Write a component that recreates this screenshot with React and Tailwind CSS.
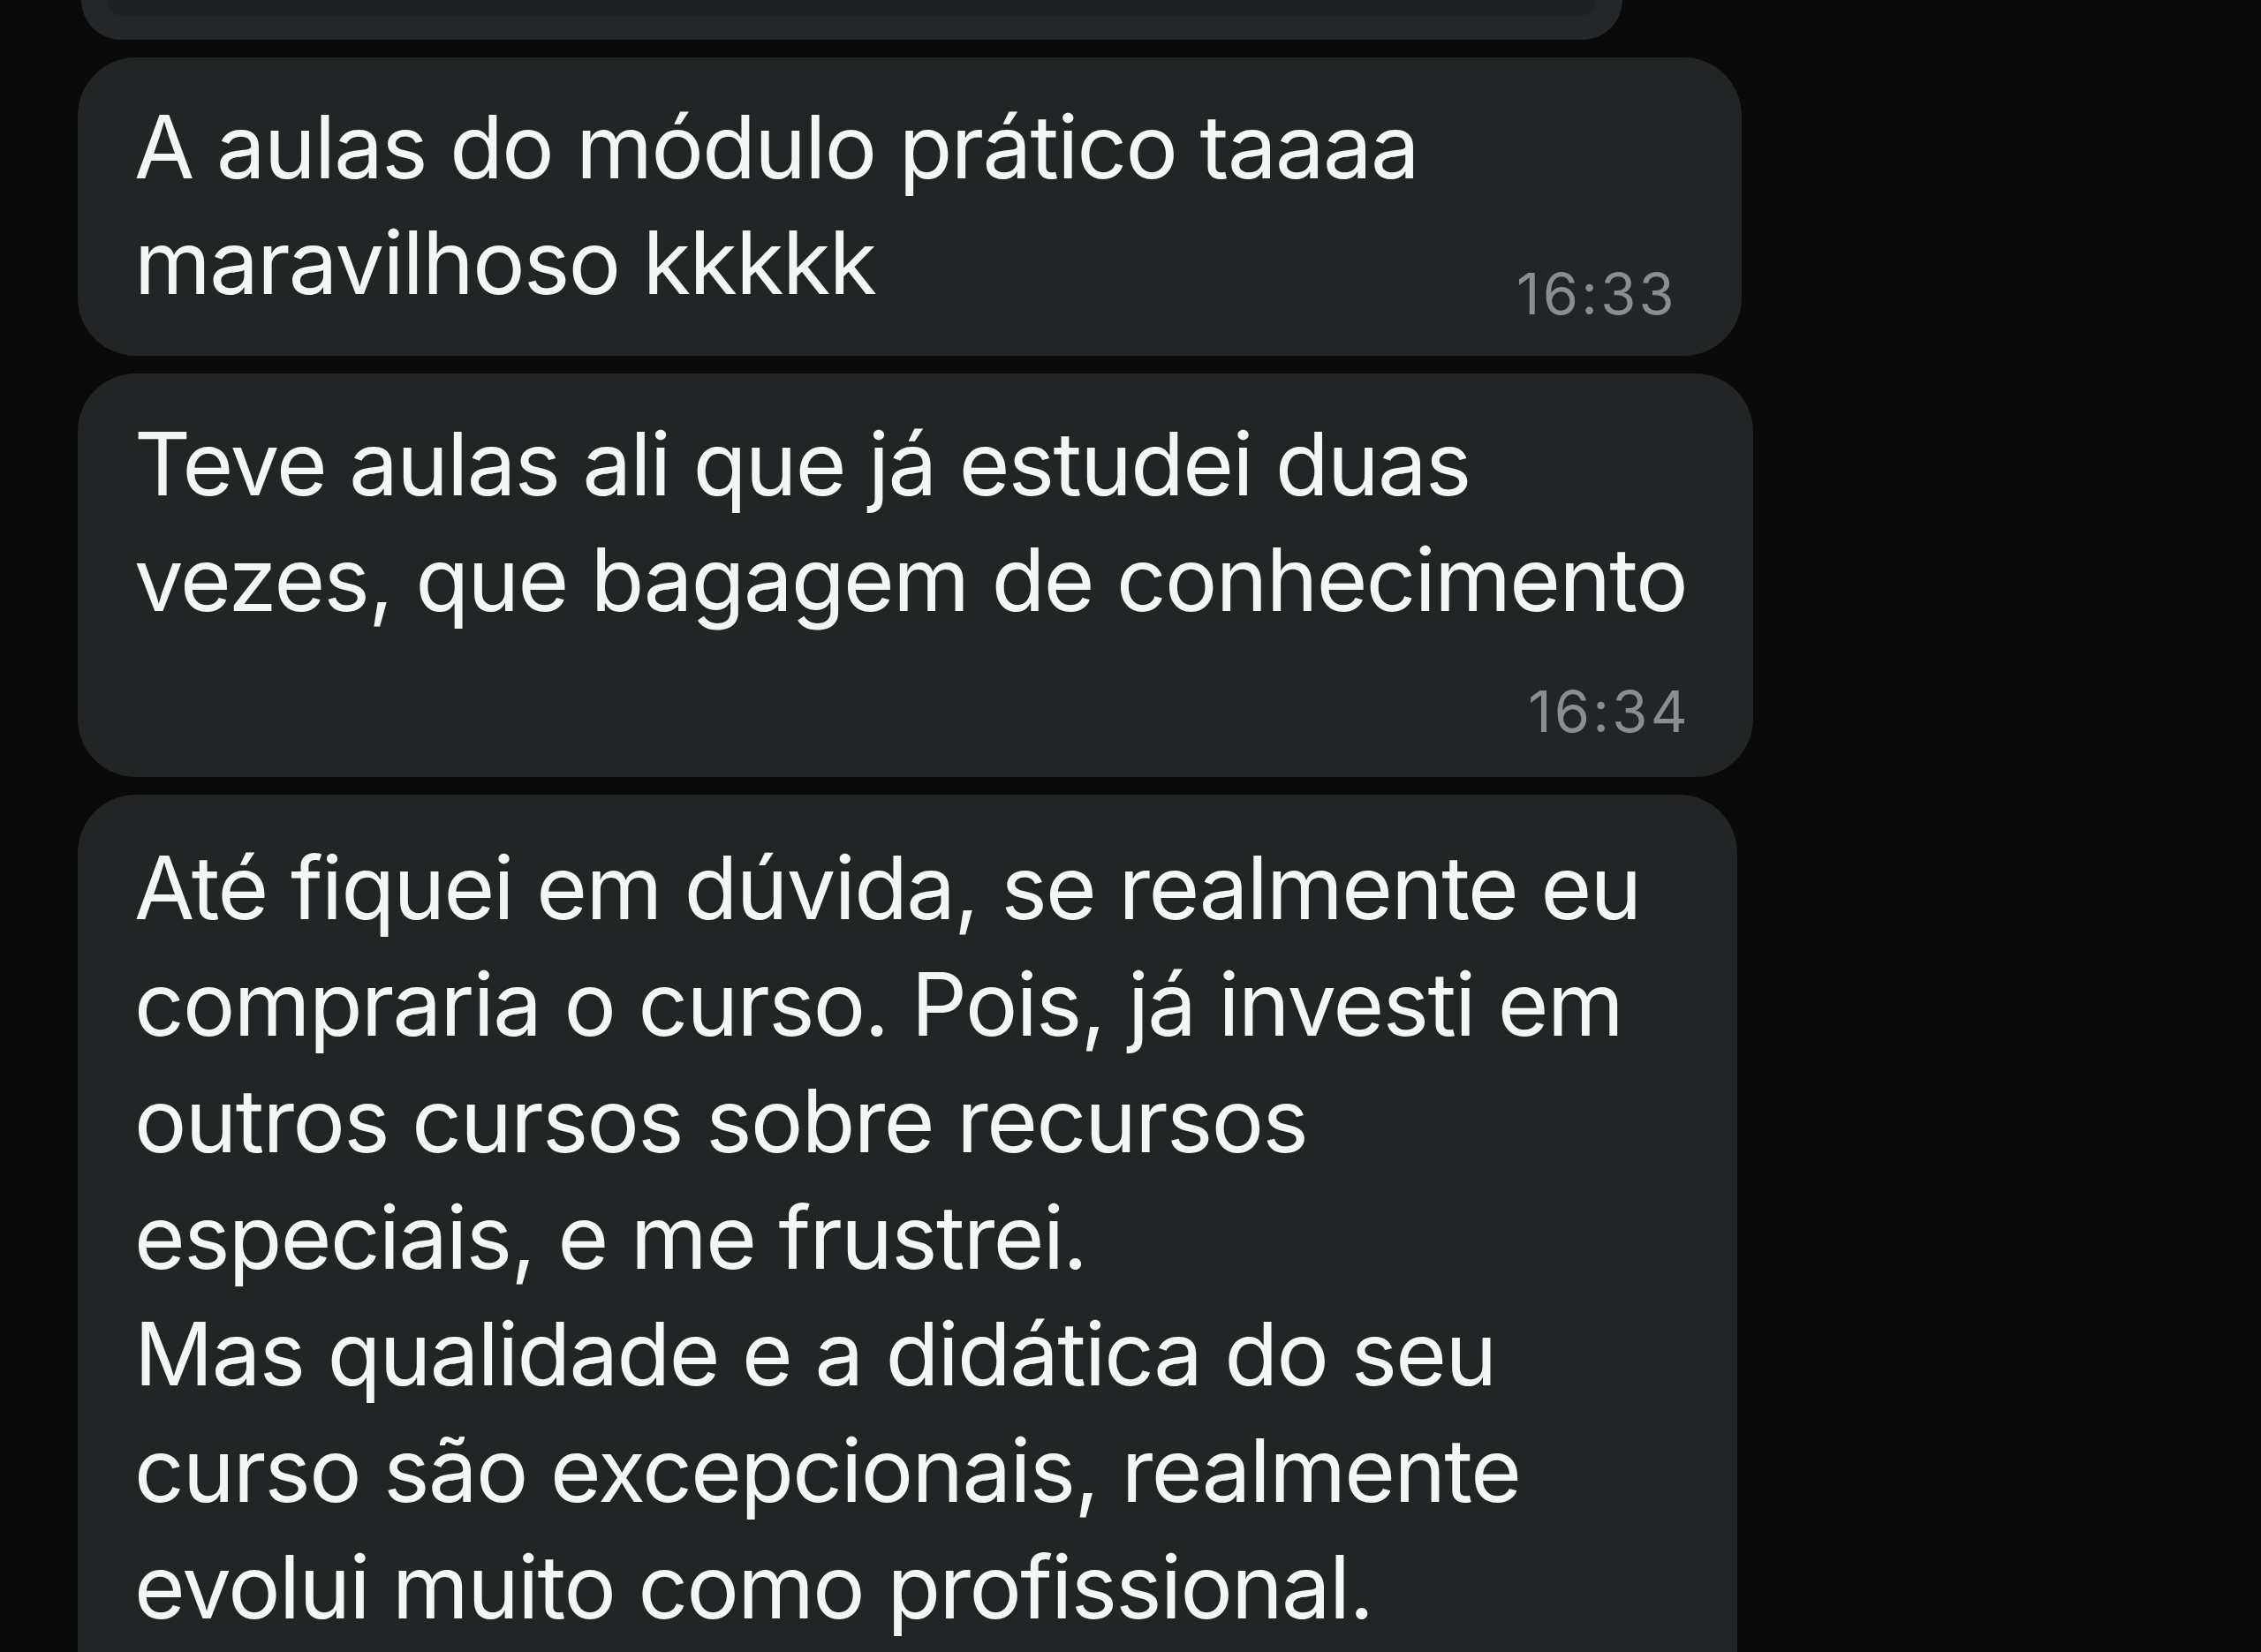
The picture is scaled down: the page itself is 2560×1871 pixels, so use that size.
export default function App() {
  const text = "text-[99px] leading-[131px] text-[#f4f5f5] tracking-[-0.016em] whitespace-nowrap";
  const time = "text-[65px] leading-[65px] text-[#8b8e90] tracking-[0.05em] whitespace-nowrap";
  return (
    <div className="w-[2560px] h-[1871px] overflow-hidden bg-[#0a0a0a] font-['Inter',sans-serif]">
      <div className="flex flex-col gap-[20px] pl-[88px]">
        {/* partially visible bubble at top */}
        <div className="w-[1745px] h-[45px] ml-[4px] bg-[#242729] rounded-b-[60px] px-[30px]">
          <div className="h-[19px] bg-[#1f2123] rounded-b-[40px]" />
        </div>

        {/* bubble 2 */}
        <div className="w-[1884px] h-[338px] bg-[#222526] rounded-[66px] pt-[36px] pl-[64px] pr-[73px] flex items-end justify-between pb-[40px]">
          <div className={text}>
            A aulas do módulo prático taaaa
            <br />
            maravilhoso kkkkk
          </div>
          <div className={time + " mb-[-2px]"}>16:33</div>
        </div>

        {/* bubble 3 */}
        <div className="w-[1897px] h-[457px] bg-[#222526] rounded-[66px] pt-[37px] pl-[64px] pr-[71px] flex flex-col">
          <div className={text}>
            Teve aulas ali que já estudei duas
            <br />
            vezes, que bagagem de conhecimento
          </div>
          <div className={time + " self-end mt-[51px]"}>16:34</div>
        </div>

        {/* bubble 4 */}
        <div className="w-[1879px] h-[1200px] bg-[#222526] rounded-[66px] pt-[39px] pl-[64px] pr-[73px]">
          <div className={text + " leading-[132px]"}>
            Até fiquei em dúvida, se realmente eu
            <br />
            compraria o curso. Pois, já investi em
            <br />
            outros cursos sobre recursos
            <br />
            especiais, e me frustrei.
            <br />
            Mas qualidade e a didática do seu
            <br />
            curso são excepcionais, realmente
            <br />
            evolui muito como profissional.
          </div>
        </div>
      </div>
    </div>
  );
}
